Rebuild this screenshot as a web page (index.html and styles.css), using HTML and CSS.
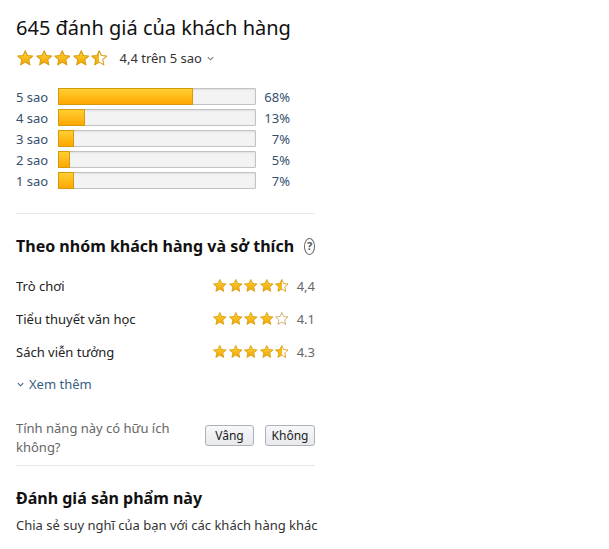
FILE: index.html
```html
<!DOCTYPE html>
<html lang="vi">

<head>
    <meta charset="UTF-8">
    <meta name="viewport" content="width=device-width, initial-scale=1.0">
    <title>Đánh giá của khách hàng</title>
    <link rel="stylesheet" href="styles.css">
</head>

<body>
    <svg class="defs" width="0" height="0">
        <defs>
            <linearGradient id="gold" x1="0" y1="0" x2="0" y2="1">
                <stop offset="0" stop-color="#ffd43a" />
                <stop offset="1" stop-color="#f0a500" />
            </linearGradient>
            <linearGradient id="half" x1="0" y1="0" x2="1" y2="0">
                <stop offset="0.5" stop-color="#f7b814" />
                <stop offset="0.5" stop-color="#fff" />
            </linearGradient>
            <path id="star" d="M12 2.2l2.8 6.3 6.9.7-5.2 4.6 1.5 6.8L12 17.1l-6 3.5 1.5-6.8-5.2-4.6 6.9-.7z" />
        </defs>
    </svg>

    <div class="reviews">
        <h2 class="title">645 đánh giá của khách hàng</h2>
        <div class="summary">
            <div class="stars big">
                <svg viewBox="0 0 24 24"><use href="#star" class="full" /></svg>
                <svg viewBox="0 0 24 24"><use href="#star" class="full" /></svg>
                <svg viewBox="0 0 24 24"><use href="#star" class="full" /></svg>
                <svg viewBox="0 0 24 24"><use href="#star" class="full" /></svg>
                <svg viewBox="0 0 24 24"><use href="#star" class="halfstar" /></svg>
            </div>
            <span class="score">4,4 trên 5 sao</span>
            <svg class="caret" viewBox="0 0 10 10"><path d="M2 3.5l3 3 3-3" /></svg>
        </div>

        <div class="histogram">
            <div class="hrow">
                <span class="hlabel">5 sao</span>
                <div class="bar"><div class="fill" style="width: 68%"></div></div>
                <span class="pct">68%</span>
            </div>
            <div class="hrow">
                <span class="hlabel">4 sao</span>
                <div class="bar"><div class="fill" style="width: 13%"></div></div>
                <span class="pct">13%</span>
            </div>
            <div class="hrow">
                <span class="hlabel">3 sao</span>
                <div class="bar"><div class="fill" style="width: 7%"></div></div>
                <span class="pct">7%</span>
            </div>
            <div class="hrow">
                <span class="hlabel">2 sao</span>
                <div class="bar"><div class="fill" style="width: 5%"></div></div>
                <span class="pct">5%</span>
            </div>
            <div class="hrow">
                <span class="hlabel">1 sao</span>
                <div class="bar"><div class="fill" style="width: 7%"></div></div>
                <span class="pct">7%</span>
            </div>
        </div>

        <hr class="divider">

        <div class="groups">
            <h3 class="subtitle">Theo nhóm khách hàng và sở thích <span class="help">?</span></h3>
            <div class="grow">
                <span class="gname">Trò chơi</span>
                <div class="stars small">
                    <svg viewBox="0 0 24 24"><use href="#star" class="full" /></svg>
                    <svg viewBox="0 0 24 24"><use href="#star" class="full" /></svg>
                    <svg viewBox="0 0 24 24"><use href="#star" class="full" /></svg>
                    <svg viewBox="0 0 24 24"><use href="#star" class="full" /></svg>
                    <svg viewBox="0 0 24 24"><use href="#star" class="halfstar" /></svg>
                </div>
                <span class="gval">4,4</span>
            </div>
            <div class="grow">
                <span class="gname">Tiểu thuyết văn học</span>
                <div class="stars small">
                    <svg viewBox="0 0 24 24"><use href="#star" class="full" /></svg>
                    <svg viewBox="0 0 24 24"><use href="#star" class="full" /></svg>
                    <svg viewBox="0 0 24 24"><use href="#star" class="full" /></svg>
                    <svg viewBox="0 0 24 24"><use href="#star" class="full" /></svg>
                    <svg viewBox="0 0 24 24"><use href="#star" class="empty" /></svg>
                </div>
                <span class="gval">4.1</span>
            </div>
            <div class="grow">
                <span class="gname">Sách viễn tưởng</span>
                <div class="stars small">
                    <svg viewBox="0 0 24 24"><use href="#star" class="full" /></svg>
                    <svg viewBox="0 0 24 24"><use href="#star" class="full" /></svg>
                    <svg viewBox="0 0 24 24"><use href="#star" class="full" /></svg>
                    <svg viewBox="0 0 24 24"><use href="#star" class="full" /></svg>
                    <svg viewBox="0 0 24 24"><use href="#star" class="halfstar" /></svg>
                </div>
                <span class="gval">4.3</span>
            </div>
            <div class="more">
                <svg class="caret" viewBox="0 0 10 10"><path d="M2 3.5l3 3 3-3" /></svg>
                <span>Xem thêm</span>
            </div>
        </div>

        <div class="helpful">
            <span class="question">Tính năng này có hữu ích không?</span>
            <div class="btns">
                <button class="btn yes">Vâng</button>
                <button class="btn no">Không</button>
            </div>
        </div>

        <hr class="divider last">

        <h3 class="subtitle write">Đánh giá sản phẩm này</h3>
        <p class="share">Chia sẻ suy nghĩ của bạn với các khách hàng khác</p>
    </div>
</body>

</html>
```

FILE: styles.css
```css
body {
    margin: 0;
    background-color: #fff;
    font-family: "Noto Sans", "Open Sans", sans-serif;
    color: #111;
}

.defs {
    position: absolute;
}

.reviews {
    width: 299px;
    padding: 14px 0 0 16px;
}

.title {
    margin: 0;
    font-size: 20px;
    font-weight: 400;
    line-height: 28px;
    color: #111;
}

.summary {
    display: flex;
    align-items: center;
    margin-top: 6px;
    height: 20px;
}

.stars {
    display: flex;
}

.stars svg {
    display: block;
}

.big svg {
    width: 18.5px;
    height: 18.5px;
}

.small svg {
    width: 15.6px;
    height: 15.6px;
}

.full {
    fill: url(#gold);
    stroke: #d99a0e;
    stroke-width: 1.3;
    stroke-linejoin: round;
}

.halfstar {
    fill: url(#half);
    stroke: #d99a0e;
    stroke-width: 1.3;
    stroke-linejoin: round;
}

.empty {
    fill: #fff;
    stroke: #c9a45a;
    stroke-width: 1.3;
    stroke-linejoin: round;
}

.score {
    margin-left: 11px;
    font-size: 13px;
    color: #333;
}

.caret {
    width: 9px;
    height: 9px;
    margin-left: 4px;
    fill: none;
    stroke: #777;
    stroke-width: 1.2;
}

.histogram {
    margin-top: 20px;
    display: flex;
    flex-direction: column;
    gap: 4px;
}

.hrow {
    display: flex;
    align-items: center;
    height: 17px;
    font-size: 13px;
    color: #35506e;
}

.hlabel {
    width: 42px;
}

.bar {
    width: 196px;
    height: 15px;
    border: 1px solid #c2c2c2;
    border-radius: 1px;
    background-color: #f3f3f3;
    box-shadow: inset 0 1px 2px rgba(0, 0, 0, 0.08);
}

.fill {
    height: 15px;
    margin: -1px 0 0 -1px;
    border: 1px solid #d59a0b;
    background: linear-gradient(#ffcf33, #ffa700);
}

.pct {
    width: 34px;
    text-align: right;
}

.divider {
    margin: 24px 0 0 0;
    border: 0;
    border-top: 1px solid #e7e7e7;
}

.divider.last {
    margin-top: 8px;
}

.subtitle {
    margin: 20px 0 0 0;
    font-size: 16px;
    font-weight: 700;
    line-height: 24px;
    white-space: nowrap;
    color: #111;
    display: flex;
    align-items: center;
}

.help {
    display: inline-flex;
    justify-content: center;
    align-items: center;
    width: 15px;
    height: 15px;
    margin-left: 10px;
    border: 1.5px solid #666;
    border-radius: 50%;
    font-size: 11px;
    color: #555;
}

.groups {
    display: flex;
    flex-direction: column;
}

.grow {
    display: flex;
    align-items: center;
    height: 33px;
    font-size: 13px;
    color: #222;
}

.grow:first-of-type {
    margin-top: 11px;
}

.gname {
    flex: 1;
}

.gval {
    width: 25px;
    text-align: right;
    color: #666;
}

.more {
    display: flex;
    align-items: center;
    height: 32px;
    font-size: 13px;
    color: #37617f;
}

.more .caret {
    margin: 0 4px 0 0;
    stroke: #37617f;
}

.helpful {
    display: flex;
    justify-content: space-between;
    align-items: center;
    margin-top: 19px;
}

.question {
    width: 155px;
    font-size: 13px;
    line-height: 19px;
    color: #666;
}

.btns {
    display: flex;
    gap: 11px;
    margin-top: -5px;
}

.btn {
    height: 21px;
    padding: 0;
    border: 1px solid #adb1b8;
    border-radius: 3px;
    background: linear-gradient(#f7f8fa, #e7e9ec);
    font-family: inherit;
    font-size: 12px;
    color: #222;
    cursor: pointer;
}

.yes {
    width: 49px;
}

.no {
    width: 50px;
}

.write {
    margin-top: 20px;
}

.share {
    margin: 6px 0 0 0;
    font-size: 13px;
    white-space: nowrap;
    color: #333;
}
```
